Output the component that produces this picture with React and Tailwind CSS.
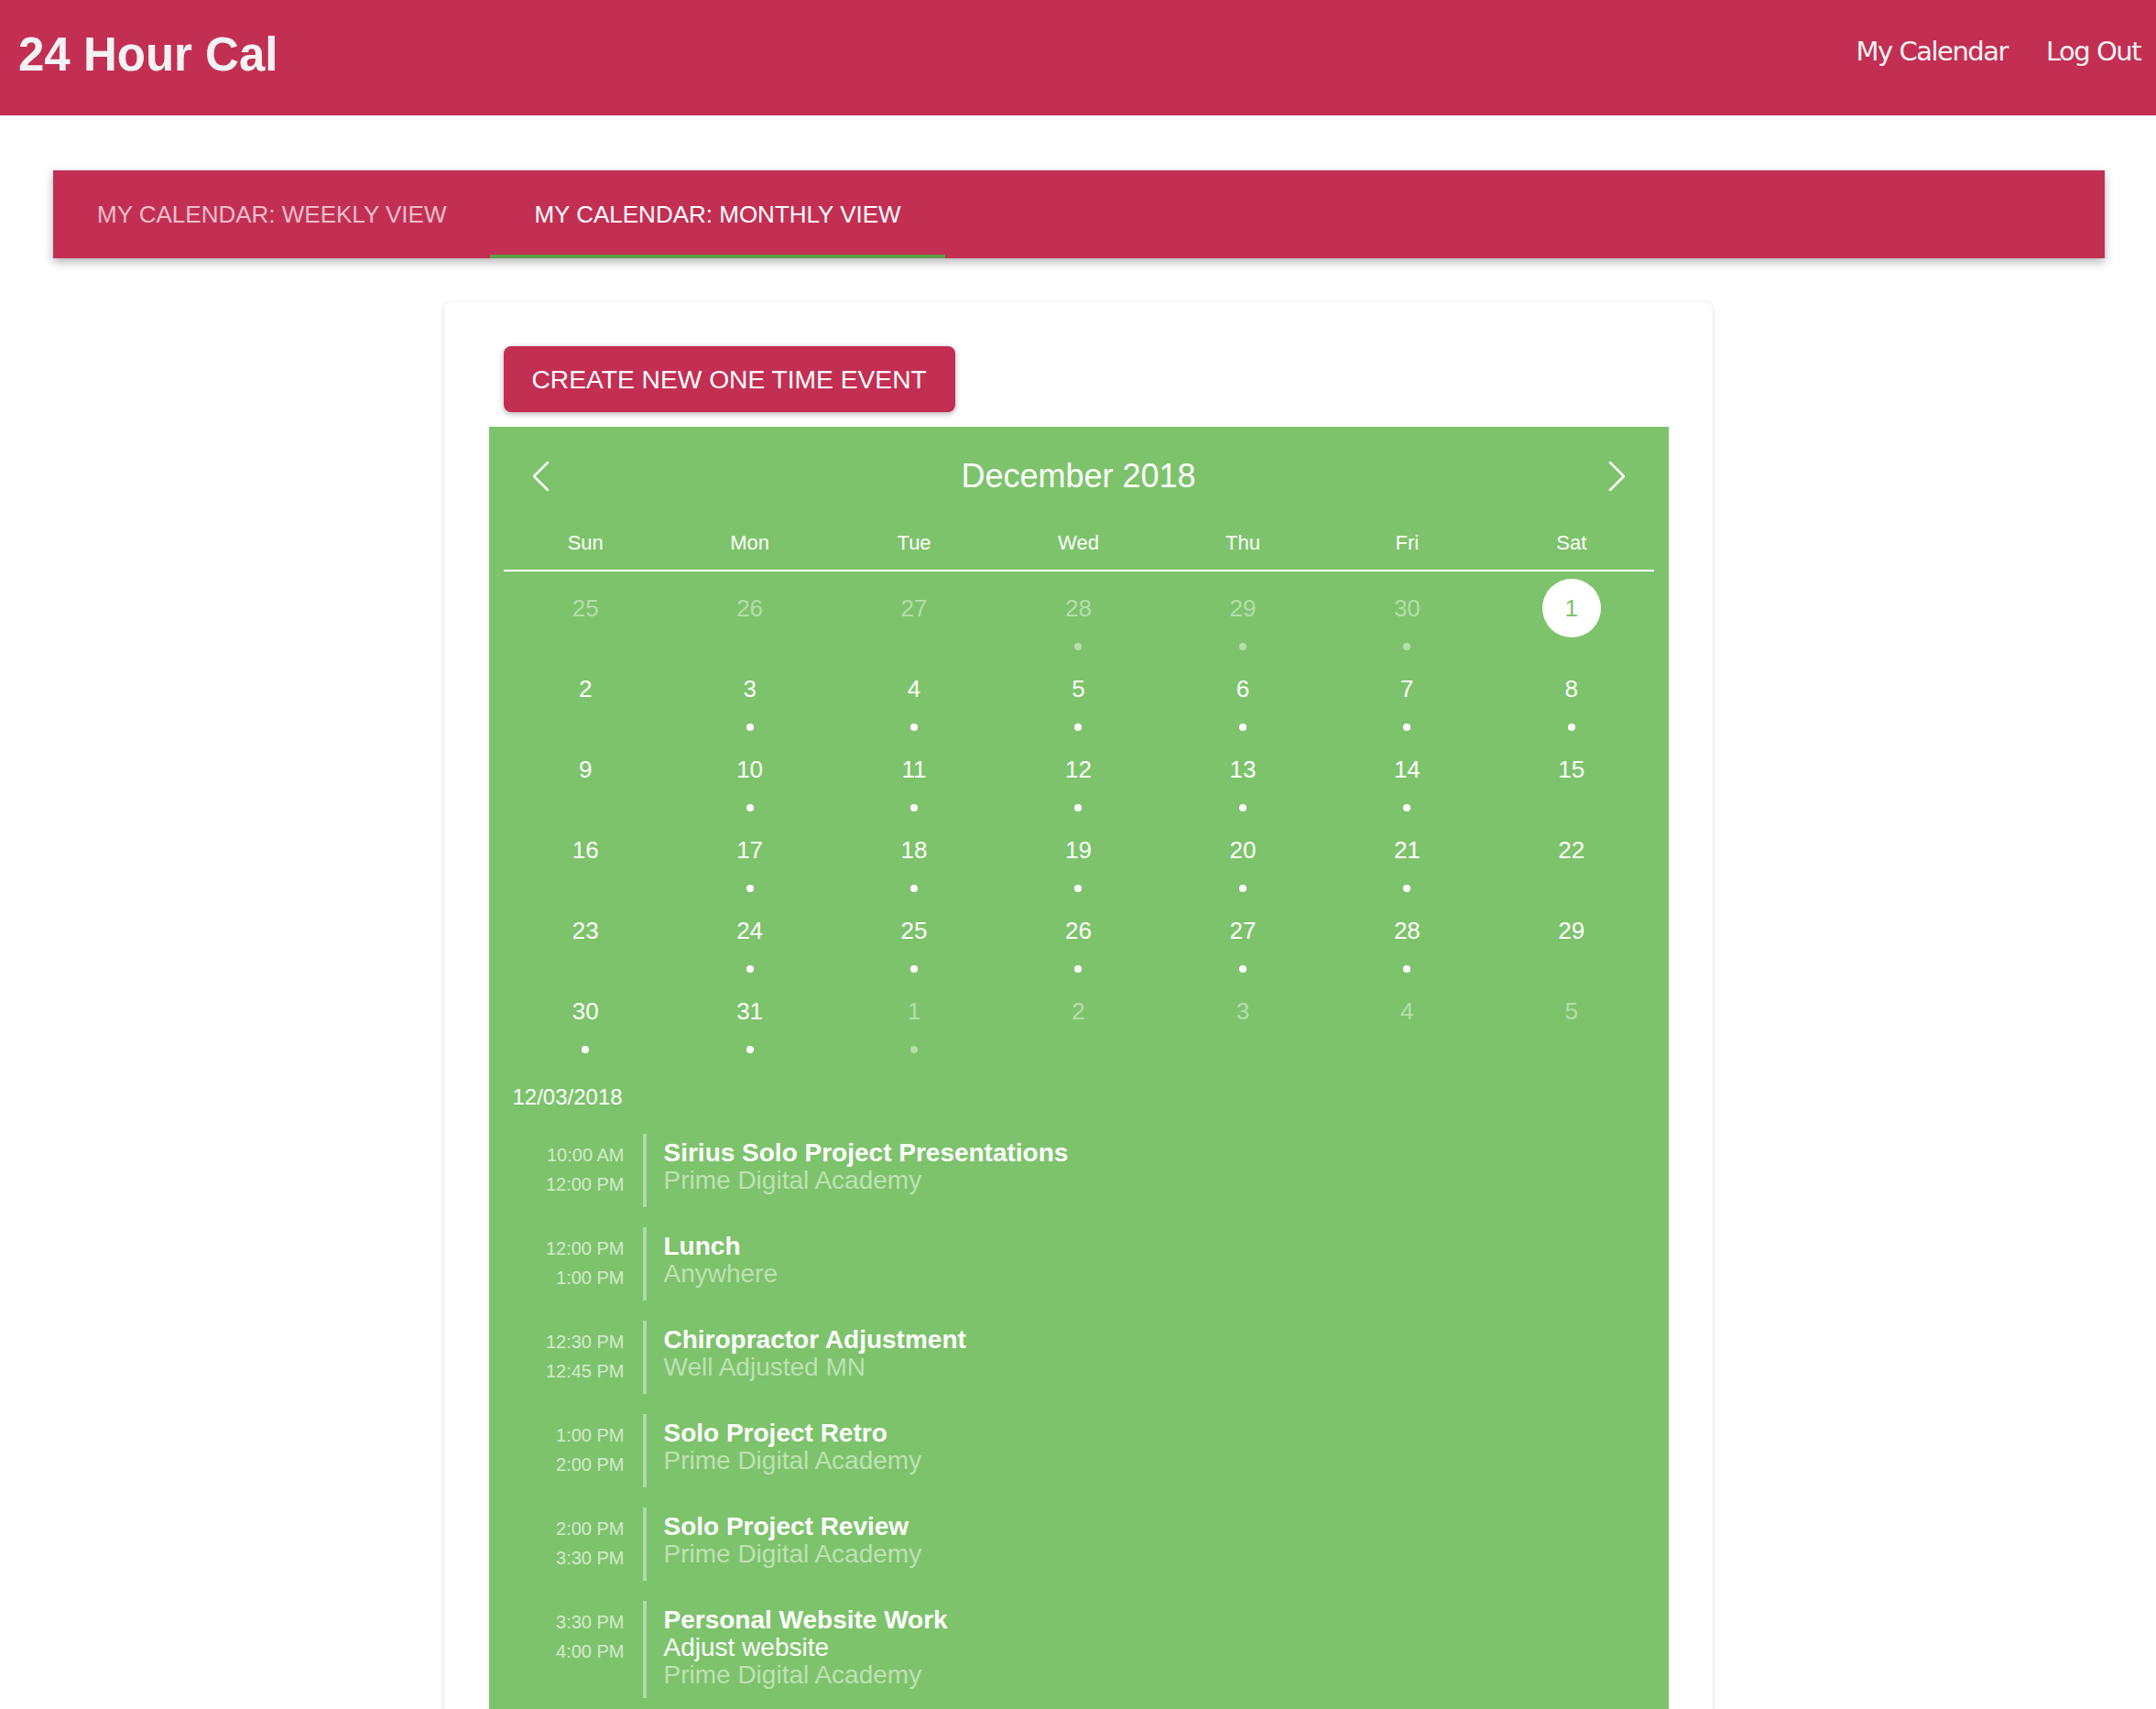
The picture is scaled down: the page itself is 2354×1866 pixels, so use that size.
import React from "react";

const weekdays = ["Sun", "Mon", "Tue", "Wed", "Thu", "Fri", "Sat"];

// d: day, o: other month, e: has events, s: selected
const weeks = [
  [{ d: 25, o: 1 }, { d: 26, o: 1 }, { d: 27, o: 1 }, { d: 28, o: 1, e: 1 }, { d: 29, o: 1, e: 1 }, { d: 30, o: 1, e: 1 }, { d: 1, s: 1 }],
  [{ d: 2 }, { d: 3, e: 1 }, { d: 4, e: 1 }, { d: 5, e: 1 }, { d: 6, e: 1 }, { d: 7, e: 1 }, { d: 8, e: 1 }],
  [{ d: 9 }, { d: 10, e: 1 }, { d: 11, e: 1 }, { d: 12, e: 1 }, { d: 13, e: 1 }, { d: 14, e: 1 }, { d: 15 }],
  [{ d: 16 }, { d: 17, e: 1 }, { d: 18, e: 1 }, { d: 19, e: 1 }, { d: 20, e: 1 }, { d: 21, e: 1 }, { d: 22 }],
  [{ d: 23 }, { d: 24, e: 1 }, { d: 25, e: 1 }, { d: 26, e: 1 }, { d: 27, e: 1 }, { d: 28, e: 1 }, { d: 29 }],
  [{ d: 30, e: 1 }, { d: 31, e: 1 }, { d: 1, o: 1, e: 1 }, { d: 2, o: 1 }, { d: 3, o: 1 }, { d: 4, o: 1 }, { d: 5, o: 1 }],
];

const events = [
  { start: "10:00 AM", end: "12:00 PM", title: "Sirius Solo Project Presentations", where: "Prime Digital Academy" },
  { start: "12:00 PM", end: "1:00 PM", title: "Lunch", where: "Anywhere" },
  { start: "12:30 PM", end: "12:45 PM", title: "Chiropractor Adjustment", where: "Well Adjusted MN" },
  { start: "1:00 PM", end: "2:00 PM", title: "Solo Project Retro", where: "Prime Digital Academy" },
  { start: "2:00 PM", end: "3:30 PM", title: "Solo Project Review", where: "Prime Digital Academy" },
  { start: "3:30 PM", end: "4:00 PM", title: "Personal Website Work", note: "Adjust website", where: "Prime Digital Academy" },
];

const Chevron = ({ dir }) => (
  <svg width="18" height="32" viewBox="0 0 18 32" fill="none">
    <polyline
      points={dir === "left" ? "16,1 1,16 16,31" : "2,1 17,16 2,31"}
      stroke="white"
      strokeWidth="2.5"
      strokeLinecap="round"
      strokeLinejoin="round"
    />
  </svg>
);

const DayCell = ({ day }) => (
  <div className="h-[88px] flex flex-col items-center">
    <div
      className={
        "mt-1 w-16 h-16 rounded-full flex items-center justify-center text-[26px] " +
        (day.s ? "bg-white text-[#7dc36b]" : day.o ? "text-white/45" : "text-white")
      }
    >
      {day.d}
    </div>
    {day.e ? (
      <div className={"mt-[6px] w-2 h-2 rounded-full " + (day.o ? "bg-white/45" : "bg-white")} />
    ) : null}
  </div>
);

const EventRow = ({ ev }) => (
  <div className="flex mb-[22px]">
    <div className="w-[122px] pt-[7px] pb-[9px] text-right text-[20px] leading-[32px] text-white/65">
      <div>{ev.start}</div>
      <div>{ev.end}</div>
    </div>
    <div className="ml-5 border-l-4 border-white/40 pl-[19px] pt-[6px] pb-[10px] text-[28px] leading-[30px]">
      <div className="font-bold text-white">{ev.title}</div>
      {ev.note && <div className="text-white">{ev.note}</div>}
      <div className="text-white/50">{ev.where}</div>
    </div>
  </div>
);

export default function App() {
  return (
    <div className="min-h-screen bg-white font-['Liberation_Sans',Arial,sans-serif]">
      <header className="h-[126px] bg-[#c32f53] flex items-start justify-between">
        <h1 className="ml-[20px] mt-[35px] text-[51px] leading-[50px] font-bold text-[#f2f2f2]">
          24 Hour Cal
        </h1>
        <nav className="mt-[41px] mr-[17px] flex gap-[42px] font-['DejaVu_Sans',sans-serif] text-[29px] leading-[30px] tracking-[-1.5px] text-[#f2f2f2]">
          <a>My Calendar</a>
          <a>Log Out</a>
        </nav>
      </header>

      <div className="ml-[58px] mr-[56px] mt-[60px] h-[96px] bg-[#c32f53] flex shadow-[0_4px_10px_rgba(0,0,0,0.3)]">
        <div className="px-12 flex items-center text-[26px] uppercase text-white/70">
          My Calendar: Weekly View
        </div>
        <div className="relative px-12 flex items-center text-[26px] uppercase text-white">
          My Calendar: Monthly View
          <div className="absolute left-0 right-0 bottom-0 h-1 bg-[#5c9c4a]" />
        </div>
      </div>

      <div className="mx-auto mt-[48px] w-[1385px] rounded-lg bg-white pl-[49px] pr-[48px] pt-12 pb-12 shadow-[0_1px_5px_rgba(0,0,0,0.16)]">
        <button className="ml-4 h-[72px] px-[31px] rounded-lg bg-[#c32f53] text-white text-[28.2px] uppercase shadow-[0_2px_6px_rgba(0,0,0,0.3)]">
          Create New One Time Event
        </button>

        <div className="mt-4 bg-[#7dc36b] px-4 pt-[34px] pb-12 text-white">
          <div className="h-10 px-8 flex items-center justify-between">
            <Chevron dir="left" />
            <div className="text-[36px] leading-10">December 2018</div>
            <Chevron dir="right" />
          </div>

          <div className="mt-[38px] grid grid-cols-7 pb-[14px] border-b-2 border-white text-[22px] leading-[30px] text-center">
            {weekdays.map((w) => (
              <div key={w}>{w}</div>
            ))}
          </div>

          <div className="pt-1">
            {weeks.map((wk, i) => (
              <div key={i} className="grid grid-cols-7">
                {wk.map((day, j) => (
                  <DayCell key={j} day={day} />
                ))}
              </div>
            ))}
          </div>

          <div className="mt-[26px] ml-[10px] text-[24px] leading-8">12/03/2018</div>

          <div className="mt-6 ml-[10px]">
            {events.map((ev, i) => (
              <EventRow key={i} ev={ev} />
            ))}
          </div>
        </div>
      </div>
    </div>
  );
}
